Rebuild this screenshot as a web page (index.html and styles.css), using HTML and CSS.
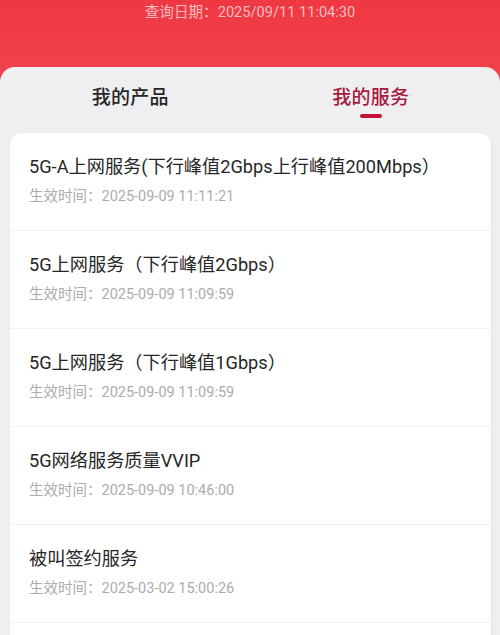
FILE: index.html
```html
<!DOCTYPE html>
<html lang="zh-CN">
<head>
<meta charset="utf-8">
<link rel="stylesheet" href="styles.css">
</head>
<body>
<div class="page">
  <div class="header">
    <div class="query-date">查询日期：2025/09/11 11:04:30</div>
  </div>
  <div class="panel">
    <div class="tabs">
      <div class="tab">
        <span class="tab-label">我的产品</span>
      </div>
      <div class="tab tab-active">
        <span class="tab-label">我的服务</span>
        <span class="tab-bar"></span>
      </div>
    </div>
    <div class="card">
      <div class="item">
        <div class="item-title">5G-A上网服务(下行峰值2Gbps上行峰值200Mbps）</div>
        <div class="item-time">生效时间：2025-09-09 11:11:21</div>
      </div>
      <div class="item">
        <div class="item-title">5G上网服务（下行峰值2Gbps）</div>
        <div class="item-time">生效时间：2025-09-09 11:09:59</div>
      </div>
      <div class="item">
        <div class="item-title">5G上网服务（下行峰值1Gbps）</div>
        <div class="item-time">生效时间：2025-09-09 11:09:59</div>
      </div>
      <div class="item">
        <div class="item-title">5G网络服务质量VVIP</div>
        <div class="item-time">生效时间：2025-09-09 10:46:00</div>
      </div>
      <div class="item">
        <div class="item-title">被叫签约服务</div>
        <div class="item-time">生效时间：2025-03-02 15:00:26</div>
      </div>
    </div>
  </div>
</div>
</body>
</html>
```

FILE: styles.css
```css
* { box-sizing: border-box; }
html, body {
  margin: 0;
  padding: 0;
  height: 100%;
  overflow: hidden;
}
body {
  font-family: Roboto, "Noto Sans CJK SC", sans-serif;
  background: #efeff1;
}
.page {
  background: linear-gradient(180deg, #ee3943 0%, #ef3c48 40%, #f0434f 100%);
  background-size: 100% 90px;
  background-repeat: no-repeat;
  min-height: 100%;
}
.header {
  height: 67px;
  display: flex;
  justify-content: center;
}
.query-date {
  font-size: 14.6px;
  line-height: 24px;
  color: rgba(255, 225, 228, 0.78);
}
.panel {
  background: #efeff1;
  border-radius: 15px 15px 0 0;
  padding: 0 9px 0 10px;
  min-height: 600px;
}
.tabs {
  display: flex;
  height: 66px;
}
.tab {
  flex: 1;
  display: flex;
  flex-direction: column;
  align-items: center;
  padding-top: 18px;
}
.tab-label {
  font-size: 19px;
  line-height: 26px;
  font-weight: 500;
  color: #262626;
  letter-spacing: 0.2px;
}
.tab-active .tab-label {
  color: #a81a3e;
}
.tab-bar {
  display: block;
  width: 22px;
  height: 4px;
  margin-top: 3px;
  border-radius: 2px;
  background: #c01538;
}
.card {
  background: #fff;
  border-radius: 12px;
  padding-bottom: 40px;
  box-shadow: 1px 0 3px rgba(0, 0, 0, 0.04);
}
.item {
  height: 98px;
  padding: 22px 20px 0 19px;
  border-bottom: 1px solid #f3f3f3;
}
.item-title {
  font-size: 18.2px;
  line-height: 24px;
  color: #262626;
  white-space: nowrap;
}
.item-time {
  margin-top: 8px;
  font-size: 14.5px;
  line-height: 20px;
  color: #acacac;
}
```
